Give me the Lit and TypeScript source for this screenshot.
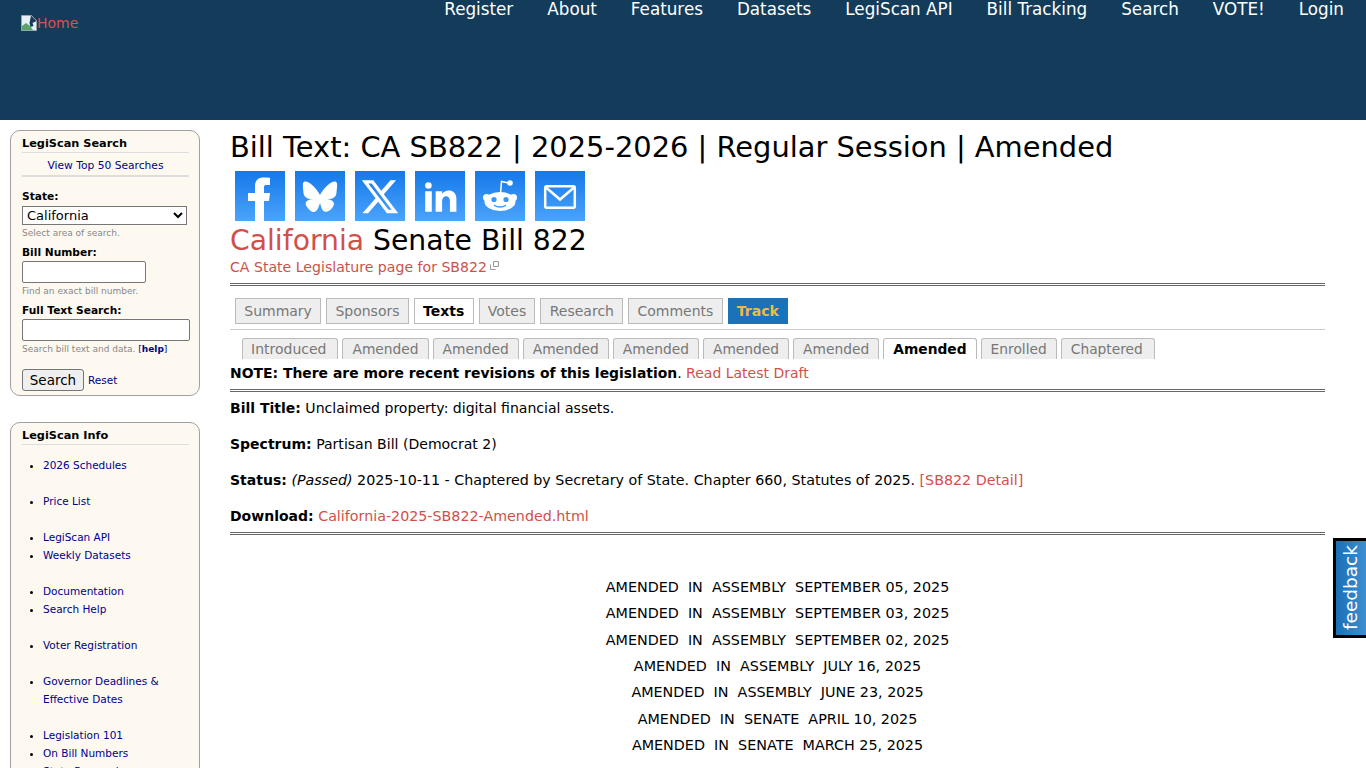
import { LitElement, html, css } from 'lit';
import { customElement } from 'lit/decorators.js';

const NAV = ['Register', 'About', 'Features', 'Datasets', 'LegiScan API', 'Bill Tracking', 'Search', 'VOTE!', 'Login'];
const TABS = ['Summary', 'Sponsors', 'Texts', 'Votes', 'Research', 'Comments'];
const DRAFTS = ['Introduced', 'Amended', 'Amended', 'Amended', 'Amended', 'Amended', 'Amended', 'Amended', 'Enrolled', 'Chaptered'];
const AMENDS = [
  'AMENDED  IN  ASSEMBLY  SEPTEMBER 05, 2025',
  'AMENDED  IN  ASSEMBLY  SEPTEMBER 03, 2025',
  'AMENDED  IN  ASSEMBLY  SEPTEMBER 02, 2025',
  'AMENDED  IN  ASSEMBLY  JULY 16, 2025',
  'AMENDED  IN  ASSEMBLY  JUNE 23, 2025',
  'AMENDED  IN  SENATE  APRIL 10, 2025',
  'AMENDED  IN  SENATE  MARCH 25, 2025',
];
const INFO = [
  ['2026 Schedules'],
  ['Price List'],
  ['LegiScan API', 'Weekly Datasets'],
  ['Documentation', 'Search Help'],
  ['Voter Registration'],
  ['Governor Deadlines & Effective Dates'],
  ['Legislation 101', 'On Bill Numbers', 'State Research'],
];

@customElement('app-root')
export class AppRoot extends LitElement {
  private social() {
    return html`
      <svg class="share" viewBox="0 0 50 50"><path fill="#fff" d="M20 50V30h-7v-8h7v-7c0-6 3.500-8.500 9-8.500 2.500 0 6 .3 6 .3V14h-3.500c-2.500 0-2.500 1-2.500 3.500V22h6l-1 8h-5v20z"/></svg>
      <svg class="share" viewBox="-5.500 -6 35 35"><path fill="#fff" d="M12 10.800c-1.087-2.114-4.046-6.053-6.798-7.995C2.566.944 1.561 1.266.902 1.565.139 1.908 0 3.080 0 3.768c0 .69.378 5.650.624 6.479.815 2.736 3.713 3.660 6.383 3.364-3.912.58-7.387 2.005-2.830 7.078 5.013 5.190 6.870-1.113 7.823-4.308.953 3.195 2.050 9.271 7.733 4.308 4.267-4.308 1.172-6.498-2.740-7.078 2.670.297 5.568-.628 6.383-3.364.246-.828.624-5.790.624-6.479 0-.688-.139-1.860-.902-2.203-.659-.299-1.664-.621-4.300 1.240C16.046 4.748 13.087 8.687 12 10.800Z"/></svg>
      <svg class="share" viewBox="-4.500 -5 33 33"><path fill="#fff" d="M18.901 1.153h3.680l-8.040 9.190L24 22.846h-7.406l-5.800-7.584-6.638 7.584H.474l8.600-9.830L0 1.154h7.594l5.243 6.932ZM17.610 20.644h2.039L6.486 3.240H4.298Z"/></svg>
      <svg class="share" viewBox="-.500 -1 25 25"><path fill="#fff" transform="translate(12 12) scale(.82) translate(-12 -12)" d="M6.940 5a2 2 0 1 1-4-.002 2 2 0 0 1 4 .002zM7 8.480H3V21h4V8.480zm6.320 0H9.340V21h3.940v-6.570c0-3.660 4.770-4 4.770 0V21H22v-7.930c0-6.170-7.060-5.940-8.720-2.910l.040-1.680z"/></svg>
      <svg class="share" viewBox="0 0 50 50">
        <path fill="none" stroke="#fff" stroke-width="1.500" d="M25.500 23l1-12.500 7 1.500"/>
        <circle cx="35" cy="12" r="2.800" fill="#fff"/>
        <circle cx="11.500" cy="26.500" r="3.500" fill="#fff"/>
        <circle cx="38.500" cy="26.500" r="3.500" fill="#fff"/>
        <ellipse cx="25" cy="30.500" rx="15.500" ry="9.500" fill="#fff"/>
        <circle cx="19" cy="28.500" r="2.600" fill="#3c96f5"/>
        <circle cx="31" cy="28.500" r="2.600" fill="#3c96f5"/>
        <path fill="none" stroke="#3c96f5" stroke-width="1.500" stroke-linecap="round" d="M19.500 34.500c3 2 8 2 11 0"/>
      </svg>
      <svg class="share" viewBox="0 0 50 50"><rect x="10.200" y="15.200" width="29.600" height="21.600" rx="1.500" fill="none" stroke="#fff" stroke-width="2.500"/><path fill="none" stroke="#fff" stroke-width="2.500" d="M11 16.500l14 12 14-12"/></svg>
    `;
  }

  render() {
    return html`
      <header>
        <a class="home"><svg width="16" height="16" viewBox="0 0 16 16"><path fill="#e8eef6" stroke="#9aa5b1" d="M.5.500h10l5 5v10H.5z"/><path fill="#5aa469" d="M1 15V11l4-3 4 3 3 4z"/><path fill="#123c5a" d="M10 .5l5.500 5.500-4 2 1 3-3 1-1-4z"/></svg>Home</a>
        <nav>${NAV.map((n) => html`<a>${n}</a>`)}</nav>
      </header>
      <div class="page">
        <aside>
          <section class="box search">
            <h3>LegiScan Search</h3>
            <a class="top">View Top 50 Searches</a>
            <label class="first">State:</label>
            <select><option>California</option></select>
            <small>Select area of search.</small>
            <label>Bill Number:</label>
            <input class="short" />
            <small>Find an exact bill number.</small>
            <label>Full Text Search:</label>
            <input class="wide" />
            <small>Search bill text and data. <span class="help">[<b>help</b>]</span></small>
            <div class="actions"><button>Search</button><a>Reset</a></div>
          </section>
          <section class="box info">
            <h3>LegiScan Info</h3>
            ${INFO.map((g) => html`<ul>${g.map((i) => html`<li><a>${i}</a></li>`)}</ul>`)}
          </section>
        </aside>
        <main>
          <h1>Bill Text: CA SB822 | 2025-2026 | Regular Session | Amended</h1>
          <div class="social">${this.social()}</div>
          <h2><a>California</a> Senate Bill 822</h2>
          <div class="ext"><a>CA State Legislature page for SB822</a><svg width="11" height="11" viewBox="0 0 11 11"><path fill="none" stroke="#999" d="M4.500 1.500h5v5h-5zM1.500 4.500v5h5"/></svg></div>
          <hr class="double" />
          <div class="tabs">
            ${TABS.map((t) => html`<a class=${t === 'Texts' ? 'tab on' : 'tab'}>${t}</a>`)}
            <a class="tab track">Track</a>
          </div>
          <div class="drafts">
            ${DRAFTS.map((d, i) => html`<a class=${i === 7 ? 'draft on' : 'draft'}>${d}</a>`)}
          </div>
          <div class="note"><b>NOTE: There are more recent revisions of this legislation</b>. <a>Read Latest Draft</a></div>
          <hr class="double" />
          <div class="meta">
            <p><b>Bill Title:</b> Unclaimed property: digital financial assets.</p>
            <p><b>Spectrum:</b> Partisan Bill (Democrat 2)</p>
            <p><b>Status:</b> <i>(Passed)</i> 2025-10-11 - Chaptered by Secretary of State. Chapter 660, Statutes of 2025. <a>[SB822 Detail]</a></p>
            <p><b>Download:</b> <a>California-2025-SB822-Amended.html</a></p>
          </div>
          <hr class="double" />
          <div class="amends">${AMENDS.map((a) => html`<div>${a}</div>`)}</div>
        </main>
      </div>
      <a class="feedback">feedback</a>
    `;
  }

  static styles = css`
    :host {
      display: block;
      height: 768px;
      overflow: hidden;
      position: relative;
      background: #fff;
      color: #000;
      font-family: 'DejaVu Sans', sans-serif;
      font-size: 14px;
    }
    header {
      height: 120px;
      background: #123c5a;
      position: relative;
      display: flex;
      justify-content: flex-end;
    }
    .home {
      position: absolute;
      left: 21px;
      top: 15px;
      display: flex;
      align-items: center;
      color: #d9534a;
      font-size: 14px;
      line-height: 16px;
    }
    nav {
      display: flex;
      gap: 34px;
      padding: 0 22px 0 0;
      height: 18px;
      line-height: 18px;
    }
    nav a {
      color: #fff;
      font-size: 16.770px;
    }
    .page {
      display: flex;
      align-items: flex-start;
      padding: 10px 41px 0 10px;
      gap: 30px;
    }
    aside {
      width: 190px;
      flex: none;
      display: flex;
      flex-direction: column;
      gap: 26px;
    }
    .box {
      box-sizing: border-box;
      border: 1px solid #a0a0a0;
      border-radius: 10px;
      background: #fdf9f1;
      padding: 5px 10px 4px 11px;
    }
    h3 {
      margin: 0;
      font-size: 11.300px;
      line-height: 15px;
      padding: 0 0 1px;
      border-bottom: 1px solid #ddd;
    }
    .search a, .info a {
      color: #00008b;
      font-size: 10.500px;
    }
    .search .top {
      display: block;
      text-align: center;
      font-size: 10.700px;
      line-height: 25px;
      height: 22px;
      border-bottom: 2px solid #ddd;
    }
    label {
      display: block;
      font-size: 10.650px;
      font-weight: bold;
      line-height: 17px;
      margin-top: 2px;
    }
    label.first {
      line-height: 18px;
      margin-top: 11px;
    }
    small {
      display: block;
      color: #888;
      font-size: 9px;
      line-height: 17px;
    }
    select + small {
      margin-bottom: 1px;
    }
    select {
      display: block;
      box-sizing: border-box;
      width: 165px;
      height: 19px;
      font: 13px 'DejaVu Sans', sans-serif;
      background: #fff;
    }
    input {
      display: block;
      box-sizing: border-box;
      height: 22px;
      border: 1px solid #767676;
      border-radius: 2px;
      background: #fff;
    }
    .short {
      width: 124px;
    }
    .wide {
      width: 168px;
    }
    .help, .help b {
      color: #00008b;
    }
    .actions {
      display: flex;
      align-items: center;
      gap: 4px;
      margin-top: 11px;
    }
    button {
      box-sizing: border-box;
      width: 62px;
      height: 22px;
      padding: 0;
      border: 1px solid #767676;
      border-radius: 3px;
      background: #efefef;
      font: 13.500px 'DejaVu Sans', sans-serif;
      color: #000;
    }
    .info {
      padding-bottom: 30px;
    }
    ul {
      margin: 0 0 18px;
      padding: 0 0 0 21px;
      font-size: 10.500px;
      line-height: 18px;
    }
    h3 + ul {
      margin-top: 11px;
    }
    main {
      flex: 1;
      min-width: 0;
    }
    main a {
      color: #d0504a;
    }
    h1 {
      margin: 0;
      font-size: 28.900px;
      font-weight: normal;
      line-height: 34px;
    }
    .social {
      display: flex;
      gap: 10px;
      padding: 7px 0 0 5px;
    }
    .share {
      display: block;
      width: 50px;
      height: 50px;
      background: linear-gradient(#1578ea, #4ba4fb);
    }
    h2 {
      margin: 2px 0 0;
      font-size: 28.240px;
      font-weight: normal;
      line-height: 36px;
    }
    .ext {
      line-height: 18px;
      font-size: 14.100px;
      display: flex;
      align-items: flex-start;
      margin-top: -1px;
    }
    .ext svg {
      margin: 2px 0 0 2px;
    }
    hr {
      margin: 0;
      border: none;
    }
    .double {
      box-sizing: border-box;
      height: 3px;
      border-top: 3px double #666;
      margin-top: 7px;
    }
    .tabs {
      display: flex;
      gap: 5px;
      padding: 12px 0 5px 5px;
      border-bottom: 1px solid #ccc;
    }
    .tab {
      box-sizing: border-box;
      height: 26px;
      padding: 0 8.250px;
      line-height: 24px;
      border: 1px solid #bbb;
      background: #eee;
      color: #777;
      font-size: 14px;
    }
    .tab.on {
      background: #fff;
      color: #000;
      font-weight: bold;
    }
    .tab.track {
      background: #1a72b8;
      border-color: #1a72b8;
      color: #f5b942;
      font-weight: bold;
    }
    .drafts {
      display: flex;
      gap: 4px;
      padding: 8px 0 0 12px;
    }
    .draft {
      box-sizing: border-box;
      height: 21px;
      padding: 0 9px;
      line-height: 20px;
      border: 1px solid #bbb;
      border-bottom: none;
      border-radius: 3px 3px 0 0;
      background: #eee;
      color: #777;
      font-size: 13.800px;
    }
    .draft:first-child {
      padding: 0 11px 0 8px;
      font-size: 14px;
    }
    .draft:last-child {
      padding: 0 11px 0 9px;
    }
    .draft.on {
      background: #fff;
      color: #000;
      font-weight: bold;
    }
    .note {
      line-height: 18px;
      margin-top: 5px;
    }
    .note b {
      font-size: 13.930px;
    }
    .meta {
      padding-top: 7px;
      line-height: 18px;
      font-size: 14.280px;
    }
    .meta b {
      font-size: 14px;
    }
    .meta p {
      margin: 0 0 18px;
    }
    .meta p:nth-child(-n + 2) {
      font-size: 14.070px;
    }
    .meta p:last-child {
      margin-bottom: 0;
    }
    .amends {
      margin-top: 39px;
      text-align: center;
      white-space: pre;
      font-size: 14.330px;
      line-height: 26.330px;
    }
    .feedback {
      position: absolute;
      right: 0;
      top: 538px;
      box-sizing: border-box;
      width: 33px;
      height: 100px;
      border: 3px solid #000;
      border-left: none;
      background: linear-gradient(270deg, #1a6fb5, #3d8fd1);
      color: #fff;
      font-size: 18.500px;
      line-height: 30px;
      text-align: center;
      writing-mode: vertical-rl;
      transform: rotate(180deg);
    }
  `;
}
